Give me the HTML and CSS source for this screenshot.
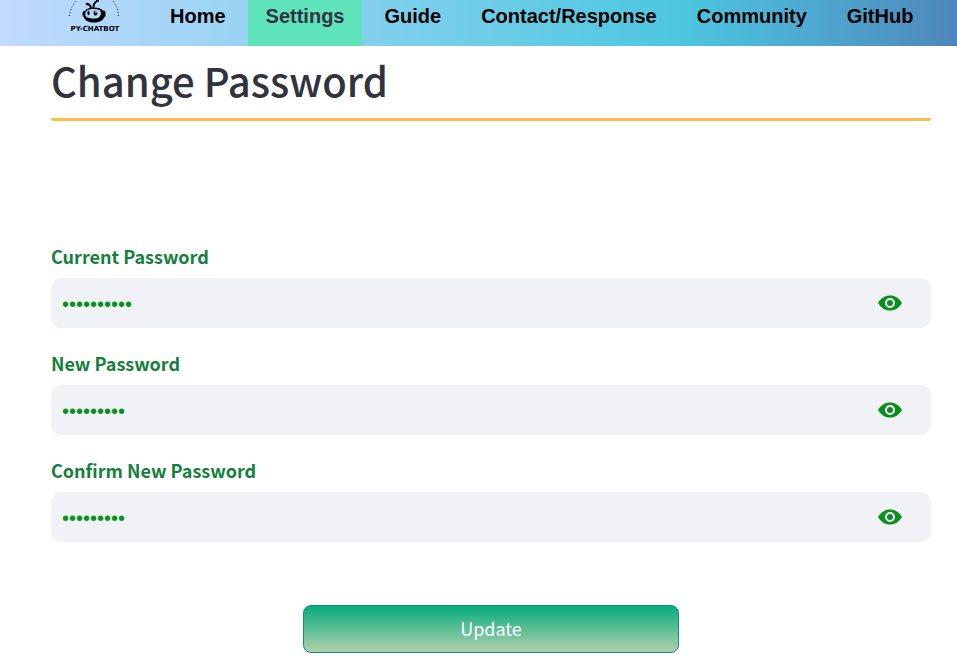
FILE: index.html
```html
<!DOCTYPE html>
<html lang="en">
<head>
<meta charset="utf-8">
<meta name="viewport" content="width=device-width, initial-scale=1">
<title>Change Password</title>
<link rel="stylesheet" href="styles.css">
</head>
<body>
<nav class="navbar">
  <a class="logo" href="#" aria-label="PY-CHATBOT">
    <svg width="54" height="34" viewBox="0 0 54 34">
      <path class="orbit" d="M1.500 16C2 9 5 4 10-1M43-1C48 4 50 9 50.500 16"/>
      <path class="antenna" d="M23.500 10C23 6 21.500 4.500 19.500 4M25.500 9C25 5 26.500 2.500 29 1"/>
      <circle cx="19" cy="4" r="1.300"/>
      <circle cx="29.500" cy="0.500" r="1.500"/>
      <rect x="14.500" y="11" width="4" height="6" rx="2"/>
      <rect x="33.500" y="10.500" width="4" height="7" rx="2"/>
      <path d="M26 7.500C19 7.500 15.500 10.500 15.500 15C15.500 20 20 22.500 26 22.500C32 22.500 36.500 20 36.500 15C36.500 10.500 33 7.500 26 7.500Z"/>
      <path class="face" d="M19.500 10C23 8.500 29 8.500 31.500 10C34 12 33 17 29.500 18C26 19 21 18.500 18.500 17C16.500 15 17 12 19.500 10Z"/>
      <ellipse cx="20.500" cy="13" rx="1.200" ry="2.200"/>
      <ellipse cx="27.500" cy="13" rx="2" ry="2.500"/>
      <circle class="glint" cx="28" cy="12" r="1"/>
      <text x="27" y="31" text-anchor="middle">PY-CHATBOT</text>
    </svg>
  </a>
  <a class="nav-link" href="#">Home</a>
  <a class="nav-link active" href="#" aria-current="page">Settings</a>
  <a class="nav-link" href="#">Guide</a>
  <a class="nav-link" href="#">Contact/Response</a>
  <a class="nav-link" href="#">Community</a>
  <a class="nav-link" href="#">GitHub</a>
</nav>
<main class="page">
  <h1>Change Password</h1>
  <form class="form">
    <div class="field">
      <label for="current">Current Password</label>
      <div class="control">
        <input id="current" type="password" value="abcdefghij" autocomplete="off">
        <button class="reveal" type="button" aria-label="Show current password"><svg width="24" height="16" viewBox="0 0 24 16"><path d="M0 8C3 3 7 .500 12 .500S21 3 24 8C21 13 17 15.500 12 15.500S3 13 0 8Z"/><circle class="ring" cx="12" cy="8" r="4"/></svg></button>
      </div>
    </div>
    <div class="field">
      <label for="new">New Password</label>
      <div class="control">
        <input id="new" type="password" value="abcdefghi" autocomplete="off">
        <button class="reveal" type="button" aria-label="Show new password"><svg width="24" height="16" viewBox="0 0 24 16"><path d="M0 8C3 3 7 .500 12 .500S21 3 24 8C21 13 17 15.500 12 15.500S3 13 0 8Z"/><circle class="ring" cx="12" cy="8" r="4"/></svg></button>
      </div>
    </div>
    <div class="field">
      <label for="confirm">Confirm New Password</label>
      <div class="control">
        <input id="confirm" type="password" value="abcdefghi" autocomplete="off">
        <button class="reveal" type="button" aria-label="Show confirmed password"><svg width="24" height="16" viewBox="0 0 24 16"><path d="M0 8C3 3 7 .500 12 .500S21 3 24 8C21 13 17 15.500 12 15.500S3 13 0 8Z"/><circle class="ring" cx="12" cy="8" r="4"/></svg></button>
      </div>
    </div>
    <button class="submit" type="button">Update</button>
  </form>
</main>
</body>
</html>
```
FILE: styles.css
```css
* {
  box-sizing: border-box;
}

body {
  margin: 0;
  background: #fff;
  color: #31333f;
  font-family: "Noto Sans CJK SC", "Noto Sans", sans-serif;
}

.navbar {
  display: flex;
  gap: 4px;
  padding-left: 68px;
  background: linear-gradient(90deg, #c2dafe 0%, #4cc7df 71%, #4f86bd 100%);
}

.logo {
  margin-right: 26px;
}

.logo svg {
  display: block;
}

.logo text {
  font: bold 7px "DejaVu Sans", sans-serif;
}

.orbit,
.antenna {
  fill: none;
  stroke: #000;
}

.orbit {
  stroke-dasharray: 1 2;
}

.antenna {
  stroke-width: 2;
}

.face,
.glint {
  fill: #b3d8f9;
}

.nav-link {
  padding: 4px 18px 18px;
  color: #000;
  font: bold 20px/24px "Liberation Sans", Arial, sans-serif;
  text-decoration: none;
}

.nav-link.active {
  background: #5fe3bb;
  color: #31333f;
}

.page {
  padding: 0 26px 0 51px;
}

h1 {
  margin: 0;
  padding: 8px 0 12px;
  border-bottom: 3px solid #ffbd45;
  border-radius: 2px;
  font-size: 40px;
  font-weight: 500;
  line-height: 52px;
}

.form {
  display: flex;
  flex-direction: column;
  gap: 23px;
  padding-top: 123px;
}

.field {
  display: flex;
  flex-direction: column;
  gap: 10px;
}

label {
  color: #15803d;
  font-size: 18px;
  font-weight: 700;
  line-height: 24px;
}

.control {
  display: flex;
  align-items: center;
  height: 50px;
  padding: 0 29px 0 11px;
  border-radius: 10px;
  background: #f0f2f6;
}

input {
  flex: 1;
  min-width: 0;
  padding: 2px 0 0;
  border: 0;
  outline: 0;
  background: none;
  color: #09901f;
  font: 20px/24px "Liberation Sans", Arial, sans-serif;
}

.reveal {
  padding: 0;
  border: 0;
  background: none;
}

.reveal svg {
  display: block;
  fill: #09901f;
}

.reveal .ring {
  stroke: #fff;
  stroke-width: 2;
}

.submit {
  align-self: center;
  width: 376px;
  max-width: 100%;
  height: 48px;
  margin-top: 40px;
  padding: 0 0 2px;
  border: 1px solid #159070;
  border-radius: 8px;
  background: linear-gradient(#07ac7c, #b0d1ae);
  color: #fff;
  font: 18px/24px "Noto Sans CJK SC", sans-serif;
}
```
